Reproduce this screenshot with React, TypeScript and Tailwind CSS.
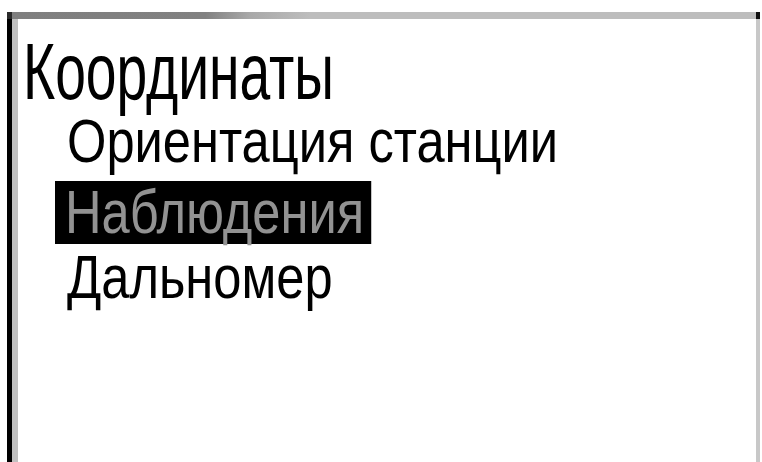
export default function App() {
  const font = { fontFamily: '"Liberation Sans", Arial, sans-serif' };
  return (
    <div className="h-[462px] w-[762px] overflow-hidden bg-white pt-[12px] pl-[7px] pr-[2px]" style={font}>
      <div className="flex h-[450px] flex-col">
        {/* top edge of the screen frame */}
        <div className="flex h-[7px] shrink-0">
          <div className="w-[5px] bg-[#2a2a2a]" />
          <div className="flex-1 bg-[linear-gradient(to_right,#7f7f7f_0%,#818181_26%,#a9a9a9_32%,#bdbdbd_40%,#bdbdbd_100%)]" />
          <div className="w-[4px] bg-[#111111]" />
        </div>
        <div className="flex flex-1">
          <div className="w-[5px] bg-black" />
          <div className="w-[6px] bg-[#c0c0c0]" />
          <div className="flex flex-1 flex-col items-start pl-[5px] pt-[14px] text-black">
            <div className="h-[77px] origin-left scale-x-[0.69] whitespace-nowrap text-[80px] leading-[77px]">
              Координаты
            </div>
            <div className="flex flex-col items-start pl-[44px]">
              <div className="h-[63px] origin-left scale-x-[0.83] whitespace-nowrap text-[61px] leading-[63px]">
                Ориентация станции
              </div>
              <div className="-ml-[12px] mt-[8px] h-[63px] origin-left scale-x-[0.83] whitespace-nowrap bg-black pl-[12px] pr-[8px] text-[61px] leading-[63px] text-[#929292]">
                Наблюдения
              </div>
              <div className="mt-[2px] h-[63px] origin-left scale-x-[0.83] whitespace-nowrap text-[61px] leading-[63px]">
                Дальномер
              </div>
            </div>
          </div>
          <div className="w-[4px] bg-[#c8c8c8]" />
        </div>
      </div>
    </div>
  );
}
